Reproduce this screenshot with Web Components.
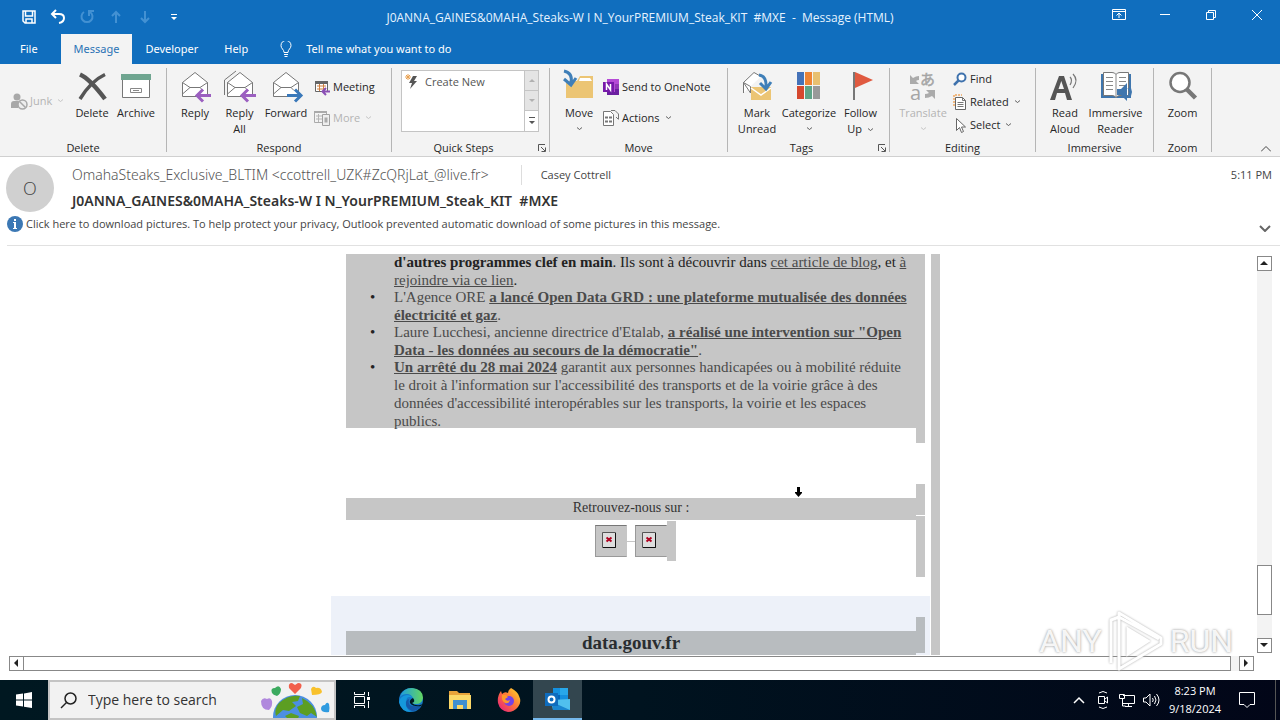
<!DOCTYPE html>
<html lang="en">
<head>
<meta charset="utf-8">
<title>Message (HTML)</title>
<style>
  html, body { height: 100%; }
  body {
    margin: 0;
    background: #fff;
    color: #262626;
    font: 12px/16px "Open Sans", "Noto Sans", sans-serif;
    overflow: hidden;
  }
  svg { display: block; fill: none; overflow: visible; }
</style>
</head>
<body>
<desktop-screen>
  <title-bar>
    J0ANNA_GAINES&amp;0MAHA_Steaks-W I N_YourPREMIUM_Steak_KIT &nbsp;#MXE &nbsp;- &nbsp;Message (HTML)
  </title-bar>

  <ribbon-tabs></ribbon-tabs>

  <ribbon-bar>
    <ribbon-group label="Delete" style="--w:167px; --pad:11px">
      <ribbon-item disabled caret style="--w:59px">
        <svg slot="icon" width="16" height="17"><circle cx="6" cy="4" r="3.5" fill="#a8a8a8"/><path d="M0 15V11q0-3 3-3h6l-2 7z" fill="#a8a8a8"/><circle cx="11.500" cy="11.500" r="4.500" fill="#eee" stroke="#a8a8a8" stroke-width="1.500"/><path d="M8.500 8.500l6 6" stroke="#a8a8a8" stroke-width="1.500"/></svg>
        Junk</ribbon-item>
      <ribbon-button style="--w:44px">
        <svg slot="icon" width="32" height="32"><path d="M4 4.500Q14 9 29 29" stroke="#555" stroke-width="4.500"/><path d="M29 4.500Q15 11 4 29" stroke="#555" stroke-width="3.500"/></svg>
        Delete</ribbon-button>
      <ribbon-button style="--w:44px">
        <svg slot="icon" width="32" height="32"><path d="M2.500 9v18.500h27V9" fill="#fff" stroke="#777"/><path d="M1 4h30v6H1z" fill="#6fa590"/><path d="M10.500 18.500h11v4h-11zM13 20.500h6" stroke="#888"/></svg>
        Archive</ribbon-button>
    </ribbon-group>

    <ribbon-group label="Respond" style="--w:225px; --pad:6px">
      <ribbon-button style="--w:44px">
        <svg slot="icon" width="32" height="32"><path d="M3.500 12.500L16 2.500l12.500 10v14h-25z" fill="#fff" stroke="#777"/><path d="M3.500 12.500L11 17.500h10l7.500-5M11 17.500L3.500 24M21 17.500l3 3" stroke="#777"/><path d="M32 25.500H18M24 19.500l-6 6 6 6" stroke="#9b5fc0" stroke-width="3"/></svg>
        Reply</ribbon-button>
      <ribbon-button style="--w:45px">
        <svg slot="icon" width="32" height="32"><path d="M.500 25V10L12 1" stroke="#777"/><path d="M3.500 12.500L16 2.500l12.500 10v14h-25z" fill="#fff" stroke="#777"/><path d="M3.500 12.500L11 17.500h10l7.500-5M11 17.500L3.500 24M21 17.500l3 3" stroke="#777"/><path d="M32 25.500H18M24 19.500l-6 6 6 6" stroke="#9b5fc0" stroke-width="3"/></svg>
        Reply<br>All</ribbon-button>
      <ribbon-button style="--w:48px">
        <svg slot="icon" width="32" height="32"><path d="M3.500 12.500L16 2.500l12.500 10v14h-25z" fill="#fff" stroke="#777"/><path d="M3.500 12.500L11 17.500h10l7.500-5M11 17.500L3.500 24M21 17.500l3 3" stroke="#777"/><path d="M17 25.500h14M25 19.500l6 6-6 6" stroke="#3a78b9" stroke-width="3"/></svg>
        Forward</ribbon-button>
      <ribbon-stack style="--pad:4px">
        <ribbon-item>
          <svg slot="icon" width="16" height="16"><path d="M1.500 2.500h12v10h-12z" fill="#fff" stroke="#666"/><path d="M1 2h13v3H1z" fill="#666"/><path d="M3 7h9M3 10h9M5.500 5v7M9.500 5v7" stroke="#d08040"/><path d="M16 12.500H9M12 9l-3.500 3.500L12 16" stroke="#8a4fb5" stroke-width="2"/></svg>
          Meeting</ribbon-item>
        <ribbon-item disabled caret>
          <svg slot="icon" width="16" height="16"><path d="M.500 1.500h12v11H.500z" stroke="#aaa"/><path d="M0 1h13v2H0z" fill="#aaa"/><path d="M2 6h6M2 9h6M4.500 4v8" stroke="#b5b5b5"/><path d="M8.500 4.500h7v11h-7z" fill="#eee" stroke="#a0a0a0"/><path d="M10.500 7.500h3v5h-3z" fill="#aaa"/></svg>
          More</ribbon-item>
      </ribbon-stack>
    </ribbon-group>

    <ribbon-group label="Quick Steps" launcher style="--w:158px; --pad:9px">
      <quick-steps>Create New</quick-steps>
    </ribbon-group>

    <ribbon-group label="Move" style="--w:178px; --pad:8px">
      <ribbon-button caret style="--w:42px">
        <svg slot="icon" width="32" height="32"><path d="M3 11h11l3-5h13v22H3z" fill="#ecc574"/><path d="M17 8h10l2 3H16z" fill="#fff"/><path d="M1 1q9 2 7 12M1 9l7 6 5-7" stroke="#3f7fb8" stroke-width="3"/></svg>
        Move</ribbon-button>
      <ribbon-stack style="--pad:3px">
        <ribbon-item>
          <svg slot="icon" width="16" height="16"><path d="M4 0h12v16H4z" fill="#b54ad6"/><path d="M12 5h4v5h-4z" fill="#8f38b5"/><path d="M12 10h4v6H4v-3h8z" fill="#6b20a0"/><path d="M0 3h11v10H0z" fill="#7719aa"/><path d="M3.500 11V5l4 6V5" stroke="#fff" stroke-width="1.500"/></svg>
          Send to OneNote</ribbon-item>
        <ribbon-item caret>
          <svg slot="icon" width="16" height="16"><path d="M.500 1.500h7l3 3v11H.500z" fill="#fff" stroke="#777"/><path d="M2 7.500h3M6 7.500h3M2 11.500h3M6 11.500h3" stroke="#777" stroke-width="2"/><path d="M8 .500h4l3.500 3.500v5M13 7l2.500 2.500" stroke="#777"/></svg>
          Actions</ribbon-item>
      </ribbon-stack>
    </ribbon-group>

    <ribbon-group label="Tags" launcher style="--w:162px; --pad:7px">
      <ribbon-button style="--w:44px">
        <svg slot="icon" width="32" height="32"><path d="M2.500 23V12.500L13 2.500l7 4" fill="#fff" stroke="#777"/><path d="M2.500 12.500l7 4V23z" fill="#fff" stroke="#777"/><path d="M10 17h20v13H10z" fill="#ecc574"/><path d="M10 18l10 7 10-7" stroke="#fff" stroke-width="1.500"/><path d="M18 5q8 1 7 13M19 13l6 6 5-7" stroke="#3f7fb8" stroke-width="3"/></svg>
        Mark<br>Unread</ribbon-button>
      <ribbon-button caret style="--w:60px">
        <svg slot="icon" width="32" height="32"><path d="M4 2h7v13H4z" fill="#4472b8"/><path d="M12 2h7v13h-7z" fill="#ee8434"/><path d="M20 2h7v13h-7z" fill="#e8c070"/><path d="M4 16h7v13H4z" fill="#d5482e"/><path d="M12 16h7v13h-7z" fill="#5ea487"/><path d="M20 16h7v13h-7z" fill="#999"/></svg>
        Categorize</ribbon-button>
      <ribbon-button style="--w:43px">
        <svg slot="icon" width="32" height="32"><path d="M10 2l18 8-18 8z" fill="#e05a40"/><path d="M9 2v28" stroke="#777" stroke-width="2"/></svg>
        Follow<br>Up <small-caret></small-caret></ribbon-button>
    </ribbon-group>

    <ribbon-group label="Editing" style="--w:146px; --pad:8px">
      <ribbon-button disabled caret style="--w:50px">
        <svg slot="icon" width="32" height="32"><path d="M3 5l3 3q3-2 6-2v4q-2 0-3 1l3 3H3zM28 29l-3-3q-3 2-7 2v-4q2 0 4-1l-3-3h9z" fill="#ababab"/><text x="13" y="15" font-family="Noto Sans CJK JP" font-size="15" fill="#a5a5a5" stroke="#a5a5a5" stroke-width=".5">あ</text><text x="3" y="30" font-size="20" fill="#a5a5a5">a</text></svg>
        Translate</ribbon-button>
      <ribbon-stack three style="--pad:5px">
        <ribbon-item>
          <svg slot="icon" width="14" height="16"><circle cx="8.500" cy="6.500" r="4" fill="#fff" stroke="#3f72ad" stroke-width="2"/><path d="M5.500 9.500L1 14" stroke="#3f72ad" stroke-width="2.500"/></svg>
          Find</ribbon-item>
        <ribbon-item caret>
          <svg slot="icon" width="14" height="16"><path d="M1 12V1h8" stroke="#f0a860" stroke-width="1.500" stroke-dasharray="2 1"/><path d="M2.500 3.500h7l3 3v9h-10z" fill="#fff" stroke="#666"/><path d="M9.500 3.500v3h3M4.500 8.500h6M4.500 10.500h6M4.500 12.500h6" stroke="#777"/></svg>
          Related</ribbon-item>
        <ribbon-item caret>
          <svg slot="icon" width="14" height="16"><path d="M3.500 1.500v12l3-3 2 5 2-1-2-4.500h4z" fill="#fff" stroke="#666"/></svg>
          Select</ribbon-item>
      </ribbon-stack>
    </ribbon-group>

    <ribbon-group label="Immersive" style="--w:118px; --pad:7px">
      <ribbon-button style="--w:44px">
        <svg slot="icon" width="32" height="32"><path d="M1 30L10 6h5l8 24h-5l-2-7H8l-2 7zM9.500 19H15l-2.700-8z" fill="#555"/><path d="M21 7q3 3 0 8M24 4q6 6 0 14" stroke="#777" stroke-width="1.200"/></svg>
        Read<br>Aloud</ribbon-button>
      <ribbon-button style="--w:57px">
        <svg slot="icon" width="32" height="32"><path d="M1 4h30v24H1z" fill="#3f76ae"/><path d="M3.500 2.500H12q3 0 4 2 1-2 4-2h8.500v23H20q-3 0-4 2-1-2-4-2H3.500z" fill="#fff" stroke="#777"/><path d="M16 4.500v23M6 7.500h7M6 11.500h7M6 15.500h7M6 19.500h7M19 7.500h7M19 11.500h7M19 15.500h7" stroke="#888"/><path d="M17 19h4l6-6v18l-6-6h-4z" fill="#3f76ae"/><path d="M28 18q3 4 0 8M30 16q3 6 0 12" stroke="#3f76ae"/></svg>
        Immersive<br>Reader</ribbon-button>
    </ribbon-group>

    <ribbon-group label="Zoom" style="--w:58px; --pad:6px">
      <ribbon-button style="--w:45px">
        <svg slot="icon" width="32" height="32"><circle cx="13" cy="12.500" r="9.500" fill="#fff" stroke="#777" stroke-width="2.500"/><path d="M19.500 19l9 9" stroke="#777" stroke-width="4.500"/></svg>
        Zoom</ribbon-button>
    </ribbon-group>
  </ribbon-bar>

  <mail-header>
    <span slot="from">OmahaSteaks_Exclusive_BLTIM &lt;ccottrell_UZK#ZcQRjLat_@live.fr&gt;</span>
    <span slot="to">Casey Cottrell</span>
    <span slot="time">5:11 PM</span>
    <span slot="subject">J0ANNA_GAINES&amp;0MAHA_Steaks-W I N_YourPREMIUM_Steak_KIT &nbsp;#MXE</span>
    <span slot="info">Click here to download pictures. To help protect your privacy, Outlook prevented automatic download of some pictures in this message.</span>
  </mail-header>

  <reading-pane>
    <mail-body></mail-body>
  </reading-pane>

  <task-bar></task-bar>
</desktop-screen>

<script>
  class BaseElement extends HTMLElement {
    constructor() {
      super();
      this.attachShadow({ mode: 'open' });
    }

    connectedCallback() {
      const template = document.createElement('template');
      template.innerHTML = `
        <style>
          * { box-sizing: border-box; }
          svg { display: block; fill: none; flex: none; }
          button {
            display: flex;
            align-items: center;
            margin: 0;
            padding: 0;
            border: 0;
            background: none;
            color: inherit;
            font: inherit;
            white-space: nowrap;
          }
          button.center { justify-content: center; }
          a { color: inherit; }
        </style>
        ${this.render()}
      `;
      this.shadowRoot.replaceChildren(template.content.cloneNode(true));
    }
  }

  class DesktopScreen extends BaseElement {
    render() {
      return `
        <style>
          :host { display: flex; flex-direction: column; height: 100vh; }
        </style>
        <slot></slot>
      `;
    }
  }

  class TitleBar extends BaseElement {
    render() {
      return `
        <style>
          :host {
            display: grid;
            grid-template-columns: 1fr auto 1fr;
            height: 34px;
            background: #106ebe;
            color: #e6f3ff;
            stroke: #fff;
          }
          .quick, .window { display: flex; }
          .quick { padding-left: 14px; }
          .quick button { width: 29px; height: 34px; }
          .window { justify-content: flex-end; }
          .window button { width: 46px; height: 30px; }
          .off { stroke: #4391d3; }
          .title { line-height: 36px; white-space: nowrap; }
        </style>
        <div class="quick">
          <button class="center" aria-label="Save"><svg width="14" height="14" stroke-width="1.500"><path d="M1 1h12v12H3l-2-2zM3.500 1v5h7V1M4 13V9h6v4"/></svg></button>
          <button class="center" aria-label="Undo"><svg width="16" height="16" stroke-width="2"><path d="M6 1L2 5l4 4M2 5h7q5 0 5 4t-5 5"/></svg></button>
          <button class="center off" aria-label="Redo"><svg width="16" height="16" stroke-width="2"><path d="M5 3a5.500 5.500 0 1 0 6 0M10 7V2h5"/></svg></button>
          <button class="center off" aria-label="Previous item"><svg width="14" height="14" stroke-width="2"><path d="M7 13V2M3 6l4-4 4 4"/></svg></button>
          <button class="center off" aria-label="Next item"><svg width="14" height="14" stroke-width="2"><path d="M7 1v11M3 8l4 4 4-4"/></svg></button>
          <button class="center" aria-label="Customize toolbar"><svg width="8" height="8" stroke="none"><path d="M1 1h6v1H1zM1 4h6L4 7z" fill="#fff"/></svg></button>
        </div>
        <div class="title"><slot></slot></div>
        <div class="window">
          <button class="center" aria-label="Ribbon display options"><svg width="14" height="12"><path d="M.500.500h13v10H.500zM.500 2.500h13M7 9V4M4.500 6.500L7 4l2.500 2.500"/></svg></button>
          <button class="center" aria-label="Minimize"><svg width="10" height="10"><path d="M0 4.500h10"/></svg></button>
          <button class="center" aria-label="Restore"><svg width="10" height="10"><path d="M.500 2.500h7v7h-7zM2.500 2V.500h7v7H8"/></svg></button>
          <button class="center" aria-label="Close"><svg width="10" height="10"><path d="M0 0l10 10M10 0L0 10"/></svg></button>
        </div>
      `;
    }
  }

  class RibbonTabs extends BaseElement {
    render() {
      return `
        <style>
          :host { display: flex; height: 30px; background: #106ebe; color: #fff; font-family: "Noto Sans", sans-serif; font-size: 11px; }
          button { padding: 0 13px; }
          .file { padding: 0 23px 0 20px; }
          .active { background: #f3f3f3; color: #2a72b5; }
          .tell { gap: 14px; padding-left: 19px; stroke: #fff; }
        </style>
        <button class="file">File</button>
        <button class="active">Message</button>
        <button>Developer</button>
        <button>Help</button>
        <button class="tell">
          <svg width="12" height="16"><path d="M4 11.500Q4 9.500 2.500 8a5 5 0 1 1 7 0Q8 9.500 8 11.500zM4 13.500h4M4.500 15.500h3"/></svg>
          <span>Tell me what you want to do</span>
        </button>
      `;
    }
  }

  class RibbonBar extends BaseElement {
    render() {
      return `
        <style>
          :host {
            display: flex;
            height: 93px;
            box-sizing: border-box;
            padding: 4px 0;
            background: #f3f3f3;
            border-bottom: 1px solid #d0d0d0;
          }
          .collapse { margin-left: auto; align-self: flex-end; width: 28px; height: 6px; stroke: #444; }
        </style>
        <slot></slot>
        <button class="collapse center" aria-label="Collapse the ribbon"><svg width="10" height="6"><path d="M0 5.500l5-5 5 5"/></svg></button>
      `;
    }
  }

  class RibbonGroup extends BaseElement {
    render() {
      const launcher = this.hasAttribute('launcher')
        ? '<button class="launcher center" aria-label="More options"><svg width="8" height="8" stroke="#555"><path d="M.500 7V.500H7M3 3l4 4M7.500 3.500v4h-4"/></svg></button>'
        : '';
      return `
        <style>
          :host {
            display: flex;
            flex-direction: column;
            flex: none;
            box-sizing: border-box;
            width: var(--w);
            border-right: 1px solid #b5b5b5;
          }
          .items { display: flex; flex: 1 1 0; min-height: 0; padding: 2px 0 8px var(--pad); }
          .foot { display: flex; flex: none; align-items: center; height: 16px; margin-bottom: -4px; text-align: center; font-size: 11px; }
          .foot span { flex: 1; white-space: nowrap; }
          .launcher { width: 14px; }
        </style>
        <div class="items"><slot></slot></div>
        <div class="foot"><span>${this.getAttribute('label')}</span>${launcher}</div>
      `;
    }
  }

  class SmallCaret extends BaseElement {
    render() {
      return `
        <style>
          :host { display: inline-block; vertical-align: middle; margin-left: 2px; }
        </style>
        <svg width="7" height="4" stroke="currentColor" stroke-opacity=".7"><path d="M1 .500l2.500 2 2.500-2"/></svg>
      `;
    }
  }

  class RibbonButton extends BaseElement {
    render() {
      const off = this.hasAttribute('disabled');
      return `
        <style>
          :host { display: block; width: var(--w); ${off ? 'color: #b4b4b4;' : ''} }
          button { flex-direction: column; width: 100%; text-align: center; }
          span { display: block; margin-top: 3px; font-size: 11px; }
          small-caret { margin: 6px 0 0; }
        </style>
        <button ${off ? 'disabled' : ''}>
          <slot name="icon"></slot>
          <span><slot></slot></span>
          ${this.hasAttribute('caret') ? '<small-caret></small-caret>' : ''}
        </button>
      `;
    }
  }

  class RibbonItem extends BaseElement {
    render() {
      const off = this.hasAttribute('disabled');
      return `
        <style>
          :host { display: flex; align-items: center; width: var(--w, auto); ${off ? 'color: #b4b4b4;' : ''} }
          button { gap: 3px; font-size: 11px; }
        </style>
        <button ${off ? 'disabled' : ''}>
          <slot name="icon"></slot>
          <span><slot></slot></span>
          ${this.hasAttribute('caret') ? '<small-caret></small-caret>' : ''}
        </button>
      `;
    }
  }

  class RibbonStack extends BaseElement {
    render() {
      const gap = this.hasAttribute('three') ? '7px' : '15px';
      const top = this.hasAttribute('three') ? '1px' : '9px';
      return `
        <style>
          :host { display: flex; flex-direction: column; gap: ${gap}; padding: ${top} 0 0 var(--pad); --w: auto; }
        </style>
        <slot></slot>
      `;
    }
  }

  class QuickSteps extends BaseElement {
    render() {
      return `
        <style>
          :host { display: flex; width: 138px; height: 62px; box-sizing: border-box; border: 1px solid #c4c4c4; background: #fff; color: #555; font-size: 11px; }
          .step { flex: 1; align-self: flex-start; gap: 6px; padding: 3px; }
          .arrows { display: grid; grid-template-rows: 20px 20px 20px; width: 14px; }
          .arrows button { border-left: 1px solid #c4c4c4; border-bottom: 1px solid #c4c4c4; background: #e4e4e4; fill: #b0b0b0; }
          .arrows button:last-child { background: #fff; border-bottom: 0; fill: #555; }
          .arrows svg { fill: inherit; }
        </style>
        <button class="step">
          <svg width="14" height="16"><path d="M8 2h4L9 7h3l-7 8 2-6H4z" fill="#555"/><path d="M3 0v6M0 3h6M1 1l4 4M5 1L1 5" stroke="#e8a050"/></svg>
          <slot></slot>
        </button>
        <div class="arrows">
          <button class="center" aria-label="Up"><svg width="6" height="3"><path d="M0 3l3-3 3 3z"/></svg></button>
          <button class="center" aria-label="Down"><svg width="6" height="3"><path d="M0 0l3 3 3-3z"/></svg></button>
          <button class="center" aria-label="More steps"><svg width="8" height="8"><path d="M1 0h6v1H1zM1 4h6L4 7z"/></svg></button>
        </div>
      `;
    }
  }

  class MailHeader extends BaseElement {
    render() {
      return `
        <style>
          :host { display: block; padding: 7px 0 0 7px; color: #444; }
          .top { display: flex; gap: 18px; padding-right: 8px; }
          .avatar { display: grid; place-items: center; width: 48px; height: 48px; margin-left: -1px; border-radius: 50%; background: #d0d0d0; font-size: 18px; font-weight: 300; }
          .lines { flex: 1; min-width: 0; white-space: nowrap; }
          .row { display: flex; align-items: center; height: 22px; }
          .from, .subject { font-family: "Noto Sans", sans-serif; font-size: 14px; }
          .from { color: #555; font-weight: 300; }
          .to { margin-left: 32px; padding-left: 19px; border-left: 1px solid #ddd; font-size: 11px; line-height: 20px; }
          .time { margin-left: auto; font-size: 11px; }
          .subject { margin: 0; padding-top: 4px; line-height: 22px; font-weight: 600; color: #333; }
          .info { display: flex; align-items: center; gap: 3px; height: 34px; padding-right: 9px; border-bottom: 1px solid #e1e1e1; }
          .info button { gap: 3px; height: 24px; margin-bottom: 10px; font-size: 11px; }
          .info .expand { margin: 0 0 0 auto; }
        </style>
        <div class="top">
          <div class="avatar">O</div>
          <div class="lines">
            <div class="row">
              <span class="from"><slot name="from"></slot></span>
              <span class="to"><slot name="to"></slot></span>
              <span class="time"><slot name="time"></slot></span>
            </div>
            <h1 class="subject"><slot name="subject"></slot></h1>
          </div>
        </div>
        <div class="info">
          <button>
            <svg width="16" height="16"><circle cx="8" cy="8" r="8" fill="#3c78b4"/><path d="M7 3h2v2H7zM6 6h3v6h1v1H6v-1h1V7H6z" fill="#fff"/></svg>
            <slot name="info"></slot>
          </button>
          <button class="expand" aria-label="Expand header"><svg width="12" height="7" stroke="#666" stroke-width="2"><path d="M1 1l5 5 5-5"/></svg></button>
        </div>
      `;
    }
  }

  class ScrollTrack extends BaseElement {
    render() {
      const vertical = this.hasAttribute('vertical');
      const arrow = (d) => `<svg width="15" height="15"><path d="${d}" fill="#222"/></svg>`;
      return `
        <style>
          :host { display: flex; flex-direction: ${vertical ? 'column' : 'row'}; background: #f3f3f3; }
          button, .thumb { flex: none; border: 1px solid #888; background: #fff; }
          button { width: 15px; height: 15px; justify-content: center; }
          .before { flex: var(--before, 0) 0 0; }
          .thumb { flex: var(--thumb, 1) 0 0; ${vertical ? '' : 'margin-left: -1px;'} }
          .after { flex: var(--after, 0) 0 0; }
        </style>
        <button aria-label="Scroll back">${arrow(vertical ? 'M3 9h8L7 5z' : 'M9 3v8L5 7z')}</button>
        <div class="before"></div>
        <div class="thumb"></div>
        <div class="after"></div>
        <button aria-label="Scroll forward">${arrow(vertical ? 'M3 5h8L7 9z' : 'M5 3v8l4-4z')}</button>
      `;
    }
  }

  class ReadingPane extends BaseElement {
    render() {
      return `
        <style>
          :host {
            position: relative;
            display: grid;
            grid-template: minmax(0, 1fr) 15px / 1fr 15px;
            row-gap: 1px;
            column-gap: 3px;
            flex: 1;
            min-height: 0;
            padding: 8px 8px 9px 9px;
          }
          .view { padding-left: 8px; overflow: hidden; }
          scroll-track[vertical] { --before: 294; --thumb: 48; --after: 23; margin: 2px 0; }
          scroll-track:not([vertical]) { --before: 0; --thumb: 1207; --after: 8; }
          .pointer { position: absolute; left: 795px; top: 241px; }
          any-run-mark { position: absolute; right: 47px; bottom: 9px; }
        </style>
        <div class="view"><slot></slot></div>
        <scroll-track vertical></scroll-track>
        <scroll-track></scroll-track>
        <svg class="pointer" width="8" height="10"><path d="M2 0h3v5h2v1L3.500 10 0 6V5h2z" fill="#000"/></svg>
        <any-run-mark></any-run-mark>
      `;
    }
  }

  class AnyRunMark extends BaseElement {
    render() {
      return `
        <style>
          :host {
            display: flex;
            align-items: center;
            gap: 5px;
            color: rgba(255, 255, 255, 0.9);
            font: 32px/60px "Roboto", sans-serif;
            text-shadow: 0 0 3px #aaa, 0 0 2px #ccc;
            pointer-events: none;
          }
          svg { filter: drop-shadow(0 0 1px #aaa); }
        </style>
        <span>ANY</span>
        <svg width="58" height="60" stroke="#fff" stroke-width="3"><path d="M12 2l42 25v6L12 58V2zM12 6l40 22M4 52V9l8-3" stroke-linejoin="round"/><path d="M21 18l20 12-20 13z" fill="#fff"/></svg>
        <span>RUN</span>
      `;
    }
  }

  class BrokenPicture extends BaseElement {
    render() {
      return `
        <style>
          :host { display: block; width: 32px; height: 32px; box-sizing: border-box; padding: 6px; border: 1px solid #999; border-top-color: #777; border-right-color: #c6c6c6; background: #c6c6c6; }
        </style>
        <svg width="14" height="16"><path d="M.500.500h13v15H.500z" fill="#ddd" stroke="#555"/><path d="M13.500 1v14.500H1" stroke="#111"/><path d="M4.500 5.500l5 4M9.500 5.500l-5 4" stroke="#b00020" stroke-width="2"/></svg>
      `;
    }
  }

  class MailBody extends BaseElement {
    render() {
      return `
        <style>
          :host {
            display: flex;
            width: 609px;
            height: 100%;
            margin: 0 auto;
            --mark: #c6c6c6;
            color: #4a4a4a;
            font: 15px/18px "Liberation Serif", serif;
            white-space: nowrap;
          }
          .page { flex: 1; display: flex; flex-direction: column; }
          .edge { width: 9px; margin-left: 1px; background: var(--mark); }
          section { display: grid; grid-template-columns: 1fr 9px; padding: 0 5px 0 15px; }
          .marks { display: flex; flex-direction: column; gap: 1px; }
          .marks i { flex: 1; background: var(--mark); }
          .news { padding-bottom: 41px; }
          .news .block { margin-bottom: 15px; background: var(--mark); }
          ul { margin: -1px 0 -2px; padding: 0 0 0 48px; list-style-type: "\\2022\\2003\\2005"; }
          li + li { margin-top: -1px; }
          li::marker { color: #222; }
          li:first-child { list-style: none; color: #222; }
          li:first-child a { color: #4a4a4a; }
          .follow .band { margin: 14px 0 1px; background: var(--mark); text-align: center; font-size: 14px; line-height: 20px; padding-bottom: 2px; color: #333; }
          .follow .marks i:first-child { flex: 0 0 31px; }
          .pictures { display: flex; justify-content: center; align-items: center; height: 40px; margin-bottom: 16px; }
          .pictures b { width: 8px; height: 1px; background: #c6c6c6; }
          .pictures i { align-self: stretch; width: 9px; margin-right: -9px; background: var(--mark); }
          .site { flex: 1; margin-top: 19px; padding-top: 21px; background: #edf1f9; --mark: #b8bcbf; }
          h2 { margin: 14px 0 0; background: var(--mark); text-align: center; font: 700 19px/24px "Liberation Serif", serif; color: #2a2d30; }
          .site .marks { margin-bottom: 2px; }
        </style>
        <div class="page">
          <section class="news">
            <div class="block">
              <ul>
                <li><b>d'autres programmes clef en main</b>. Ils sont à découvrir dans <a href="#">cet article de blog</a>, et <a href="#">à<br>rejoindre via ce lien</a>.</li>
                <li>L'Agence ORE <a href="#"><b>a lancé Open Data GRD : une plateforme mutualisée des données<br>électricité et gaz</b></a>.</li>
                <li>Laure Lucchesi, ancienne directrice d'Etalab, <a href="#"><b>a réalisé une intervention sur "Open<br>Data - les données au secours de la démocratie"</b></a>.</li>
                <li><a href="#"><b>Un arrêté du 28 mai 2024</b></a> garantit aux personnes handicapées ou à mobilité réduite<br>le droit à l'information sur l'accessibilité des transports et de la voirie grâce à des<br>données d'accessibilité interopérables sur les transports, la voirie et les espaces<br>publics.</li>
              </ul>
            </div>
            <div class="marks"><i></i></div>
          </section>
          <section class="follow">
            <div>
              <div class="band">Retrouvez-nous sur :</div>
              <div class="pictures"><broken-picture></broken-picture><b></b><broken-picture></broken-picture><i></i></div>
            </div>
            <div class="marks"><i></i><i></i></div>
          </section>
          <section class="site">
            <h2>data.gouv.fr</h2>
            <div class="marks"><i></i></div>
          </section>
        </div>
        <div class="edge"></div>
      `;
    }
  }

  class TaskBar extends BaseElement {
    render() {
      return `
        <style>
          :host { display: flex; height: 40px; background: linear-gradient(90deg, #001821, #00131f 50%, #020618); color: #fff; stroke: #fff; }
          .start { width: 48px; }
          .search { display: flex; align-items: center; gap: 11px; width: 288px; padding-left: 10px; border: 2px solid #c4c4c4; background: #f2f2f2; color: #333; stroke: #222; overflow: hidden; }
          .search input { flex: 1; min-width: 0; padding: 0; border: 0; outline: 0; background: none; color: #333; font: 14px/20px "Open Sans", sans-serif; }
          .search input::placeholder { color: #333; opacity: 1; }
          .apps { display: flex; margin-left: 1px; }
          .app { width: 49px; }
          .open { background: #33464f; border-bottom: 2px solid #76b9ed; }
          .tray { display: flex; margin-left: auto; }
          .tray button { width: 24px; }
          .tray .clock { flex-direction: column; width: 64px; line-height: 18px; font-size: 11px; }
          .tray .notes { width: 40px; }
          .tray .desktop { width: 5px; margin-left: 8px; border-left: 1px solid #555; }
        </style>
        <button class="start center" aria-label="Start"><svg width="16" height="16" stroke="none"><path d="M0 2.500L7 1.500V7.500H0zM8 1.400L16 0V7.500H8zM0 8.500H7V14.500L0 13.500zM8 8.500H16V16L8 14.700z" fill="#fff"/></svg></button>
        <label class="search">
          <svg width="17" height="17" stroke-width="1.500"><circle cx="10.500" cy="6.500" r="5.500"/><path d="M6.500 10.500L1 16"/></svg>
          <input type="text" placeholder="Type here to search" aria-label="Type here to search">
          <svg width="74" height="38" stroke="none">
            <path d="M1 20q2-4 6-2 4-2 5 2 1 5-3 9-8 0-8-9z" fill="#b088dd"/>
            <path d="M12 12q-2-5 3-5 4-4 6 1 0 5-4 7-4-1-5-3z" fill="#3caa5f"/>
            <path d="M35 13l-6-6q-1-5 3-5l3 2 3-2q5 0 3 5z" fill="#f2604c"/>
            <path d="M52 14l-1-6q2-4 5-1 5-1 6 4-1 3-10 3z" fill="#f8c12c"/>
            <path d="M61 28q0-4 4-4 2-4 4-1 1 4 0 8-7 1-8-3z" fill="#2f9be0"/>
            <circle cx="35" cy="36" r="22" fill="#4b8fe2"/>
            <path d="M19 22q10-9 21-7l-2 5-6 1 4 4-7 5-6-1-7 6q-2-7 3-13zM42 17q13 6 15 19l-6-4-4 3-7-3-3-6 6-3zM31 32l8 3-2 5h-7l-5-5z" fill="#5c9e22"/>
          </svg>
        </label>
        <div class="apps">
          <button class="app center" aria-label="Task View"><svg width="16" height="16"><path d="M.500 0v2.500h10V0M.500 16v-2.500h10V16M.500 4.500h10v7H.500zM14.500 0v4M14.500 9v7"/><path d="M13 5h3v3h-3z" fill="#fff" stroke="none"/></svg></button>
          <button class="app center" aria-label="Microsoft Edge"><svg width="24" height="24" stroke="none"><defs><linearGradient id="edge" x1="0" y1="0" x2="1" y2="0"><stop offset="0" stop-color="#1c9de0"/><stop offset="1" stop-color="#63d660"/></linearGradient></defs><circle cx="12" cy="12" r="12" fill="#1478c8"/><path d="M1 9Q4 0 13 0q11 1 11 10-1 6-7 6-4 0-4-2 2-1 1-4-2-4-6-4-5 0-7 3z" fill="url(#edge)"/><path d="M8 10q-4 9 4 14Q2 24 0 14q1-6 8-7 4 0 6 3-4-2-6 0z" fill="#1598dc"/><path d="M10 11q-3 9 12 7-3 5-9 5-7-3-6-9 1-3 3-3z" fill="#1558a8"/><path d="M14 10q3 4-1 5 3 3 8 2l3-1-2 2q-8 1-11-3-1-3 3-5z" fill="#001821"/></svg></button>
          <button class="app center" aria-label="File Explorer"><svg width="22" height="20" stroke="none"><path d="M0 1h8l2 2h11v16H0z" fill="#e8a33a"/><path d="M0 5h22v14H0z" fill="#fbd868"/><path d="M4 19V10h14v9h-4v-4H8v4z" fill="#3f8fd0"/></svg></button>
          <button class="app center" aria-label="Firefox"><svg width="24" height="24" stroke="none"><defs><linearGradient id="fox" x1="1" y1="0" x2="0" y2="1"><stop offset="0" stop-color="#ffe226"/><stop offset=".5" stop-color="#ff7139"/><stop offset="1" stop-color="#e31587"/></linearGradient></defs><path d="M14 0q7 4 8 8 3 6-1 11-4 5-10 5Q3 23 1 15 0 8 4 3l1 3q3-3 6-1 0-3 3-5z" fill="url(#fox)"/><circle cx="12" cy="13" r="5" fill="#7542e5"/><path d="M5 7q4-1 6 2l-3 2q2 3 5 1-1 4-5 3-4-3-3-8z" fill="#ff9a28"/></svg></button>
          <button class="app open center" aria-label="Outlook"><svg width="26" height="22" stroke="none"><path d="M8 0h15v14H8z" fill="#1490df"/><path d="M15 0h8v7h-8z" fill="#28a8ea"/><path d="M8 7h7v7H8z" fill="#0364b8"/><path d="M6 12l19-1v11H8z" fill="#50c0ee"/><path d="M7 14l18 8H8z" fill="#1a86d0"/><path d="M0 5h13v13H0z" fill="#0f6cbd"/><circle cx="6.500" cy="11.500" r="3" stroke="#fff" stroke-width="2"/></svg></button>
        </div>
        <div class="tray">
          <button class="center" aria-label="Show hidden icons"><svg width="12" height="8" stroke-width="1.500"><path d="M1 7l5-5 5 5"/></svg></button>
          <button class="center" aria-label="Meet now"><svg width="12" height="18"><path d="M1.500 5.500h6v7h-6zM8 8l2.500-2v6L8 10M2 2q4-3 8 0M2 16q4 3 8 0"/></svg></button>
          <button class="center" aria-label="Network"><svg width="16" height="14"><path d="M4 2.500h11.500v8H4M9.500 11v2M6 13.500h7M.500 1.500h5v4h-5zM3.500 6v7h3"/></svg></button>
          <button class="center" aria-label="Volume"><svg width="17" height="14"><path d="M.500 5v4H3l4 4V1L3 5zM9.500 5q1.500 2 0 4M11.500 3q3 4 0 8M13.500 1q5 6 0 12"/></svg></button>
          <button class="clock center"><span>8:23 PM</span><span>9/18/2024</span></button>
          <button class="notes center" aria-label="Notifications"><svg width="16" height="16"><path d="M.500.500h15v12H11l-3 3-3-3H.500z"/></svg></button>
          <button class="desktop" aria-label="Show desktop"></button>
        </div>
      `;
    }
  }

  customElements.define('small-caret', SmallCaret);
  customElements.define('desktop-screen', DesktopScreen);
  customElements.define('title-bar', TitleBar);
  customElements.define('ribbon-tabs', RibbonTabs);
  customElements.define('ribbon-bar', RibbonBar);
  customElements.define('ribbon-group', RibbonGroup);
  customElements.define('ribbon-button', RibbonButton);
  customElements.define('ribbon-item', RibbonItem);
  customElements.define('ribbon-stack', RibbonStack);
  customElements.define('quick-steps', QuickSteps);
  customElements.define('mail-header', MailHeader);
  customElements.define('scroll-track', ScrollTrack);
  customElements.define('any-run-mark', AnyRunMark);
  customElements.define('broken-picture', BrokenPicture);
  customElements.define('mail-body', MailBody);
  customElements.define('reading-pane', ReadingPane);
  customElements.define('task-bar', TaskBar);
</script>
</body>
</html>
